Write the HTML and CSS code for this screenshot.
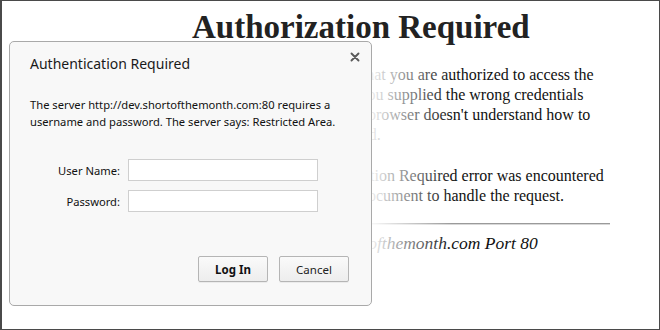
FILE: index.html
```html
<!DOCTYPE html>
<html lang="en">
<head>
  <meta charset="UTF-8">
  <title>401 Authorization Required</title>
  <link rel="stylesheet" href="styles.css">
</head>
<body>
  <div class="frame">
    <!-- Pagina de erro do Apache ao fundo -->
    <div class="doc">
      <h1>Authorization Required</h1>
      <p>This server could not verify that you are authorized to access the<br>
      document requested. Either you supplied the wrong credentials<br>
      (e.g., bad password), or your browser doesn't understand how to<br>
      supply the credentials required.</p>
      <p>Additionally, a 401 Authorization Required error was encountered<br>
      while trying to use an ErrorDocument to handle the request.</p>
      <hr>
      <address>Apache Server at dev.shortofthemonth.com Port 80</address>
    </div>

    <!-- Esmaecido ao lado da caixa -->
    <div class="fade"></div>

    <!-- Caixa de login -->
    <div class="dialog">
      <button class="close" aria-label="Close">
        <svg width="10" height="10" viewBox="0 0 10 10">
          <path d="M1.5 1.5 L8.5 8.5 M8.5 1.5 L1.5 8.5" stroke="#5a5a5a" stroke-width="1.9" stroke-linecap="round"/>
        </svg>
      </button>
      <h2>Authentication Required</h2>
      <p class="message">The server http://dev.shortofthemonth.com:80 requires a username and password. The server says: Restricted Area.</p>
      <div class="form">
        <label class="label" for="user">User Name:</label>
        <input class="field" id="user" type="text">
        <label class="label" for="pass">Password:</label>
        <input class="field" id="pass" type="password">
      </div>
      <div class="actions">
        <button class="btn btn-primary">Log In</button>
        <button class="btn">Cancel</button>
      </div>
    </div>
  </div>
</body>
</html>
```

FILE: styles.css
```css
/* Reset basico */
* {
  margin: 0;
  padding: 0;
  box-sizing: border-box;
}
html, body {
  height: 100%;
  background: #fff;
}
/* Moldura da janela */
.frame {
  position: relative;
  width: 660px;
  height: 330px;
  border: 1px solid #4a4a4a;
  border-left-width: 2px;
  overflow: hidden;
}
/* Documento do servidor */
.doc {
  padding-left: 178px;
  width: 608px;
  font-family: "Liberation Serif", "Times New Roman", serif;
  color: #111;
}
.doc h1 {
  font-size: 33px;
  line-height: 38px;
  padding-left: 12px;
  margin-top: 7px;
  color: #222;
}
.doc p {
  font-size: 16px;
  line-height: 20px;
  margin-top: 19px;
}
.doc p + p {
  margin-top: 21px;
}
.doc hr {
  margin-top: 17px;
  border: none;
  border-top: 1px solid #9a9a9a;
  border-bottom: 1px solid #d8d8d8;
}
.doc address {
  font-size: 17.5px;
  line-height: 20px;
  margin-top: 8px;
}
.fade {
  position: absolute;
  left: 370px;
  top: 41px;
  width: 80px;
  height: 264px;
  background: linear-gradient(to right, rgba(255,255,255,0.92), rgba(255,255,255,0));
}
/* Caixa de autenticacao */
.dialog {
  position: absolute;
  left: 7px;
  top: 40px;
  width: 363px;
  height: 265px;
  background: #f8f8f8;
  border: 1px solid #a9a9a9;
  border-radius: 5px;
  padding: 12px 22px 0 20px;
  font-family: "Noto Sans", "Open Sans", sans-serif;
  color: #111;
}
.close {
  position: absolute;
  top: 9px;
  right: 10px;
  width: 12px;
  height: 12px;
  border: none;
  background: none;
  display: flex;
  align-items: center;
  justify-content: center;
}
.dialog h2 {
  font-size: 14px;
  font-weight: normal;
  line-height: 20px;
  color: #1a1a1a;
}
.message {
  font-size: 11.2px;
  line-height: 17px;
  margin-top: 22px;
}
.form {
  display: grid;
  grid-template-columns: 90px 190px;
  column-gap: 8px;
  row-gap: 9px;
  align-items: center;
  margin-top: 29px;
}
.label {
  font-size: 11.2px;
  text-align: right;
}
.field {
  height: 22px;
  border: 1px solid #cfcfcf;
  background: #fff;
}
.actions {
  display: flex;
  justify-content: flex-end;
  gap: 11px;
  margin-top: 44px;
}
.btn {
  width: 70px;
  height: 26px;
  font-family: "Noto Sans", "Open Sans", sans-serif;
  font-size: 11.5px;
  color: #222;
  background: linear-gradient(#fafafa, #ededed);
  border: 1px solid #b5b5b5;
  border-radius: 2px;
  box-shadow: 0 1px 0 rgba(0,0,0,0.05);
}
.btn-primary {
  font-weight: bold;
  color: #111;
}
```
